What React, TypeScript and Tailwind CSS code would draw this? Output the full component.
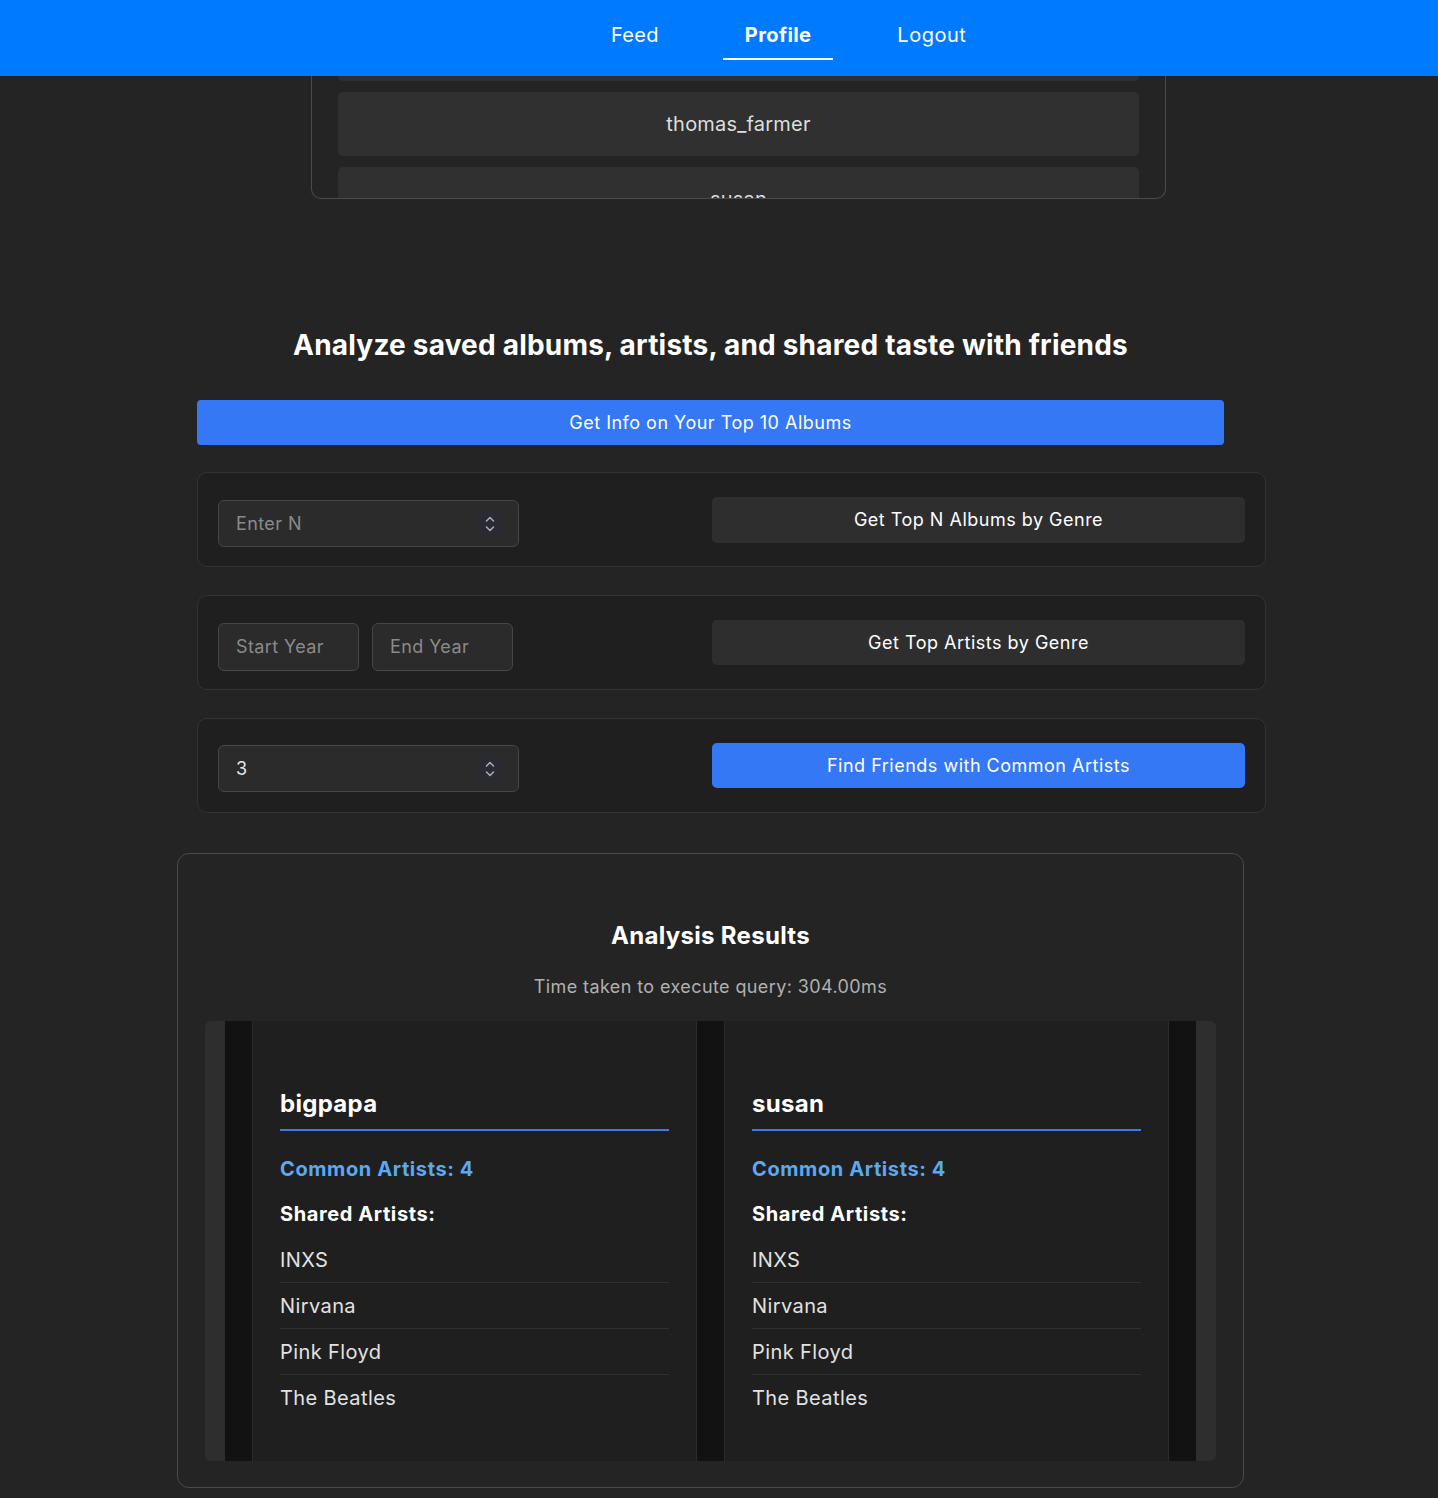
import React from "react";

const font = { fontFamily: "Inter, 'Noto Sans', Arial, sans-serif" };

function Spinner() {
  return (
    <div className="absolute right-[16px] top-1/2 -translate-y-1/2 w-[24px] h-[24px] bg-[#2a2a33] flex items-center justify-center">
      <svg width="10" height="18" viewBox="0 0 10 18" fill="none" stroke="#a9a9b0" strokeWidth="1.6" strokeLinecap="round" strokeLinejoin="round">
        <path d="M1.5 6 L5 2.5 L8.5 6" />
        <path d="M1.5 12 L5 15.5 L8.5 12" />
      </svg>
    </div>
  );
}

function NumberInput({ value, placeholder }: { value?: string; placeholder?: string }) {
  return (
    <div className="relative w-[301px] h-[47px] bg-[#2b2b2b] border border-[#464646] rounded-[6px] flex items-center pl-[17px]">
      {value ? (
        <span className="text-[18px] tracking-[0.4px] text-[#e6e6e6]">{value}</span>
      ) : (
        <span className="text-[18px] tracking-[0.4px] text-[#8a8a8a]">{placeholder}</span>
      )}
      <Spinner />
    </div>
  );
}

function TextInput({ placeholder }: { placeholder: string }) {
  return (
    <div className="w-[141px] h-[48px] bg-[#2b2b2b] border border-[#464646] rounded-[6px] flex items-center pl-[17px]">
      <span className="text-[18px] tracking-[0.4px] text-[#8a8a8a]">{placeholder}</span>
    </div>
  );
}

function Panel({ children }: { children: React.ReactNode }) {
  return (
    <div className="w-[1069px] h-[95px] bg-[#1f1f1f] border border-[#333333] rounded-[10px] px-[20px] flex items-center justify-between">
      {children}
    </div>
  );
}

function UserCard({ name }: { name: string }) {
  const artists = ["INXS", "Nirvana", "Pink Floyd", "The Beatles"];
  return (
    <div className="w-[446px] bg-[#1f1f1f] border-x border-[#2c2c2c] pl-[27px] pr-[27px] pt-[68px] pb-[40px]">
      <div className="text-[24px] leading-[30px] tracking-[0.3px] font-bold text-white pb-[10px] border-b-2 border-[#3a7be8]">
        {name}
      </div>
      <div className="mt-[26px] text-[20px] leading-[24px] tracking-[0.6px] font-bold text-[#5aa9f2]">Common Artists: 4</div>
      <div className="mt-[21px] text-[20px] leading-[24px] tracking-[0.6px] font-bold text-white">Shared Artists:</div>
      <div className="mt-[11px]">
        {artists.map((a, i) => (
          <div
            key={a}
            className={
              "h-[46px] flex items-center text-[20px] tracking-[0.4px] text-[#e2e2e2] " +
              (i < artists.length - 1 ? "border-b border-[#303030]" : "")
            }
          >
            {a}
          </div>
        ))}
      </div>
    </div>
  );
}

export default function App() {
  return (
    <div className="min-h-[1498px] bg-[#242424] text-white" style={font}>
      {/* Nav */}
      <div className="h-[76px] bg-[#007bff] flex items-start pl-[589px] gap-[42px]">
        <div className="mt-[12px] px-[22px] pt-[11px] pb-[11px] text-[20px] leading-[24px] tracking-[0.3px] text-white border-b-2 border-transparent">Feed</div>
        <div className="mt-[12px] px-[22px] pt-[11px] pb-[11px] text-[20px] leading-[24px] tracking-[0.4px] font-bold text-white border-b-2 border-white">Profile</div>
        <div className="mt-[12px] px-[22px] pt-[11px] pb-[11px] text-[20px] leading-[24px] tracking-[0.5px] text-white border-b-2 border-transparent">Logout</div>
      </div>

      {/* Scroll list remnant */}
      <div className="ml-[311px] w-[855px] h-[123px] border-x border-b border-[#4a4a4a] rounded-b-[10px] overflow-hidden">
        <div className="mt-[-59px] px-[26px] flex flex-col gap-[11px]">
          {["", "thomas_farmer", "susan"].map((n, i) => (
            <div key={i} className="h-[64px] bg-[#303030] rounded-[5px] flex items-center justify-center text-[20px] tracking-[0.2px] text-[#dedede]">
              {n}
            </div>
          ))}
        </div>
      </div>

      {/* Main */}
      <div className="ml-[197px] w-[1027px]">
        <h1 className="mt-[129px] text-center text-[28px] leading-[34px] tracking-[0.2px] font-bold text-white">
          Analyze saved albums, artists, and shared taste with friends
        </h1>
        <button className="mt-[38px] w-[1027px] h-[45px] bg-[#3478f6] rounded-[4px] text-[18px] tracking-[0.5px] text-white flex items-center justify-center">
          Get Info on Your Top 10 Albums
        </button>

        <div className="mt-[27px] flex flex-col gap-[28px]">
          <Panel>
            <div className="mt-[8px]">
              <NumberInput placeholder="Enter N" />
            </div>
            <button className="w-[533px] h-[46px] bg-[#2e2e2e] rounded-[5px] text-[18px] tracking-[0.5px] text-white">
              Get Top N Albums by Genre
            </button>
          </Panel>
          <Panel>
            <div className="mt-[8px] flex gap-[13px]">
              <TextInput placeholder="Start Year" />
              <TextInput placeholder="End Year" />
            </div>
            <button className="w-[533px] h-[45px] bg-[#2e2e2e] rounded-[5px] text-[18px] tracking-[0.5px] text-white">
              Get Top Artists by Genre
            </button>
          </Panel>
          <Panel>
            <div className="mt-[6px]">
              <NumberInput value="3" />
            </div>
            <button className="w-[533px] h-[45px] bg-[#3478f6] rounded-[5px] text-[18px] tracking-[0.5px] text-white">
              Find Friends with Common Artists
            </button>
          </Panel>
        </div>
      </div>

      {/* Results */}
      <div className="ml-[177px] mt-[40px] w-[1067px] h-[635px] border border-[#4a4a4a] rounded-[12px] px-[27px] pb-[25px]">
        <h2 className="mt-[67px] text-center text-[24px] leading-[30px] tracking-[0.3px] font-bold text-white">Analysis Results</h2>
        <p className="mt-[25px] text-center text-[18px] leading-[22px] tracking-[0.4px] text-[#b0b0b0]">
          Time taken to execute query: 304.00ms
        </p>
        <div className="mt-[23px] h-[440px] bg-[#2e2e2e] rounded-[6px] px-[20px] overflow-hidden">
          <div className="h-full bg-[#121212] px-[27px] flex gap-[27px]">
            <UserCard name="bigpapa" />
            <UserCard name="susan" />
          </div>
        </div>
      </div>
    </div>
  );
}
